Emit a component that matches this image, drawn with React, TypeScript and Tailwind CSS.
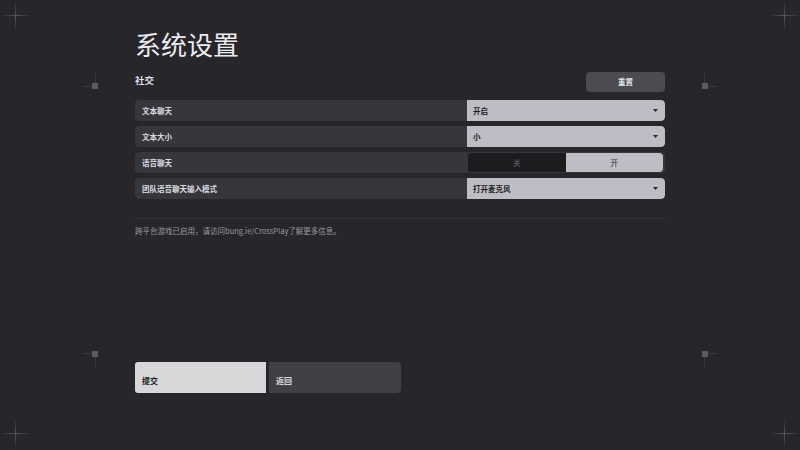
import React from "react";

const font = { fontFamily: '"Noto Sans CJK SC", "Noto Sans", sans-serif' };

function Cross({ className }: { className: string }) {
  return (
    <div className={"absolute w-[32px] h-[32px] pointer-events-none " + className}>
      <div className="absolute left-0 top-[15px] w-[32px] h-px bg-gradient-to-r from-transparent via-[#55555c] to-transparent" />
      <div className="absolute top-0 left-[15px] h-[32px] w-px bg-gradient-to-b from-transparent via-[#55555c] to-transparent" />
    </div>
  );
}

function Corner({ className, flipX, flipY }: { className: string; flipX?: boolean; flipY?: boolean }) {
  return (
    <div className={"absolute w-[20px] h-[20px] pointer-events-none " + className} style={{ transform: `scale(${flipX ? -1 : 1}, ${flipY ? -1 : 1})` }}>
      <div className="absolute left-[12px] top-[12px] w-[6px] h-[6px] bg-[#5a5a60]" />
      <div className="absolute left-[2px] top-[15px] w-[10px] h-px bg-[#3a3a40]" />
      <div className="absolute left-[15px] top-[2px] h-[10px] w-px bg-[#3a3a40]" />
    </div>
  );
}

function Caret() {
  return (
    <svg width="5" height="3" viewBox="0 0 5 3" className="shrink-0">
      <path d="M0 0 L5 0 L2.5 3 Z" fill="#2a2a2e" />
    </svg>
  );
}

function SelectRow({ label, value }: { label: string; value: string }) {
  return (
    <div className="flex h-[21px] rounded-[4px] bg-[#36363b] overflow-hidden">
      <div className="flex-1 flex items-center pl-[7px] text-[7.5px] font-bold text-[#dcdce0]">{label}</div>
      <div className="w-[198px] bg-[#bebdc5] rounded-r-[4px] flex items-center justify-between pl-[6px] pr-[7px] text-[7.5px] font-bold text-[#1e1e22]">
        <span>{value}</span>
        <Caret />
      </div>
    </div>
  );
}

export default function App() {
  return (
    <div className="relative w-[800px] h-[450px] bg-[#26262b] overflow-hidden" style={font}>
      <Cross className="left-0 top-0" />
      <Cross className="right-[-1px] top-0" />
      <Cross className="left-0 bottom-0" />
      <Cross className="right-[-1px] bottom-0" />
      <Corner className="left-[80px] top-[71px]" />
      <Corner className="left-[700px] top-[71px]" flipX />
      <Corner className="left-[80px] top-[349px]" flipY />
      <Corner className="left-[700px] top-[349px]" flipX flipY />

      <div className="absolute left-[135px] top-0 w-[530px] flex flex-col">
        <div className="pt-[26px] h-[68px] text-[26px] leading-[36px] text-[#ececef] font-normal">系统设置</div>
        <div className="flex items-center justify-between h-[24px] mt-[2px]">
          <div className="text-[9.5px] font-bold text-[#dcdce0] -mt-[4px]">社交</div>
          <div className="w-[79px] h-[20px] rounded-[4px] bg-[#4b4b51] flex items-center justify-center text-[7.5px] font-bold text-[#e6e6ea]">重置</div>
        </div>
        <div className="flex flex-col gap-[5px] mt-[6px]">
          <SelectRow label="文本聊天" value="开启" />
          <SelectRow label="文本大小" value="小" />
          <div className="flex h-[21px] rounded-[4px] bg-[#36363b] overflow-hidden">
            <div className="flex-1 flex items-center pl-[7px] text-[7.5px] font-bold text-[#dcdce0]">语音聊天</div>
            <div className="w-[198px] flex p-[1px] pr-[2px]">
              <div className="flex-1 bg-[#1c1c1f] rounded-l-[3px] flex items-center justify-center text-[7.5px] text-[#6f6f75]">关</div>
              <div className="flex-1 bg-[#bebdc5] rounded-r-[4px] flex items-center justify-center text-[7.5px] text-[#2a2a2e]">开</div>
            </div>
          </div>
          <SelectRow label="团队语音聊天输入模式" value="打开麦克风" />
        </div>
        <div className="h-px bg-[#35353a] mt-[19px]" />
        <div className="mt-[6px] text-[7.5px] text-[#9a9aa0]">跨平台游戏已启用，请访问bung.ie/CrossPlay了解更多信息。</div>
      </div>

      <div className="absolute left-[135px] top-[362px] flex gap-[3px]">
        <div className="w-[131px] h-[31px] rounded-l-[3px] bg-[#d8d8db] flex items-center pl-[7px] pt-[6px] text-[8px] font-bold text-[#222226]">提交</div>
        <div className="w-[132px] h-[31px] rounded-r-[4px] bg-[#404045] flex items-center pl-[7px] pt-[6px] text-[8px] font-bold text-[#d8d8dc]">返回</div>
      </div>
    </div>
  );
}
